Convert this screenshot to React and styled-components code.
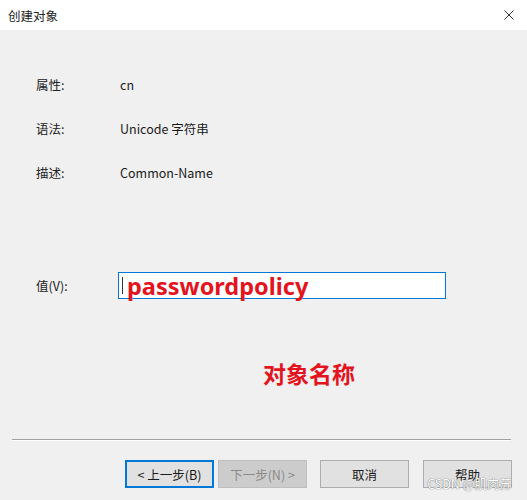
import React from "react";
import styled, { createGlobalStyle } from "styled-components";

const Global = createGlobalStyle`
  html, body {
    margin: 0;
    padding: 0;
    background: #f0f0f0;
  }
  * {
    box-sizing: border-box;
  }
`;

const Dialog = styled.div`
  position: relative;
  width: 527px;
  height: 500px;
  background: #f0f0f0;
  display: flex;
  flex-direction: column;
  font-family: "Noto Sans CJK SC", "Noto Sans", sans-serif;
  font-size: 12.5px;
  color: #1a1a1a;
  overflow: hidden;
`;

const TitleBar = styled.div`
  height: 30px;
  background: #fff;
  display: flex;
  align-items: center;
  justify-content: space-between;
  padding: 0 13px 0 8px;
  flex-shrink: 0;
`;

const Title = styled.span`
  font-size: 12.5px;
  color: #222;
`;

const Body = styled.div`
  padding-left: 36px;
  display: flex;
  flex-direction: column;
`;

const InfoList = styled.div`
  margin-top: 45px;
  display: grid;
  grid-template-columns: 84px 1fr;
  row-gap: 24px;
  line-height: 20px;
`;

const Label = styled.span`
  color: #222;
`;

const ValueRow = styled.div`
  margin-top: 89px;
  display: flex;
  align-items: center;
  height: 27px;
`;

const ValueLabel = styled.span`
  width: 82px;
  color: #222;
`;

const TextBox = styled.div`
  width: 328px;
  height: 27px;
  border: 1px solid #0078d7;
  background: #fff;
  display: flex;
  align-items: center;
  padding-left: 3px;
`;

const Caret = styled.span`
  width: 1px;
  height: 17px;
  background: #333;
  margin-right: 4px;
`;

const RedText = styled.span`
  color: #e3141e;
  font-family: "Noto Sans", sans-serif;
  font-weight: 700;
  font-size: 23.5px;
  line-height: 1;
  margin-top: 2px;
`;

const Note = styled.div`
  margin-top: 61px;
  margin-left: 227px;
  color: #e3141e;
  font-family: "Noto Sans CJK SC", sans-serif;
  font-weight: 700;
  font-size: 23px;
  line-height: 26px;
`;

const Footer = styled.div`
  margin-top: auto;
  padding: 0 15px 12px 12px;
`;

const Separator = styled.div`
  border-top: 1px solid #a0a0a0;
  border-bottom: 1px solid #ffffff;
  margin-right: 1px;
`;

const Buttons = styled.div`
  margin-top: 19px;
  display: flex;
  justify-content: flex-end;
`;

const Button = styled.button`
  width: ${(p) => p.w || 89}px;
  height: 28px;
  margin-left: ${(p) => p.gap || 0}px;
  font-family: "Noto Sans CJK SC", "Noto Sans", sans-serif;
  font-size: 12.5px;
  padding: 0;
  color: ${(p) => (p.disabled ? "#8a8a8a" : "#1a1a1a")};
  background: ${(p) => (p.disabled ? "#cccccc" : "#e1e1e1")};
  border: ${(p) =>
    p.focused
      ? "2px solid #0078d7"
      : p.disabled
      ? "1px solid #bfbfbf"
      : "1px solid #adadad"};
`;

const Watermark = styled.span`
  position: absolute;
  right: 15px;
  bottom: 7px;
  font-family: "Noto Sans CJK SC", sans-serif;
  font-size: 12.5px;
  color: #fff;
  text-shadow: 0 0 1px #777, 0 0 1px #777;
`;

const CloseIcon = () => (
  <svg width="10" height="10" viewBox="0 0 10 10">
    <path d="M0.5 0.5 L9.5 9.5 M9.5 0.5 L0.5 9.5" stroke="#333" strokeWidth="1" />
  </svg>
);

const info = [
  ["属性:", "cn"],
  ["语法:", "Unicode 字符串"],
  ["描述:", "Common-Name"],
];

export default function App() {
  return (
    <Dialog>
      <Global />
      <TitleBar>
        <Title>创建对象</Title>
        <CloseIcon />
      </TitleBar>
      <Body>
        <InfoList>
          {info.map(([k, v]) => (
            <React.Fragment key={k}>
              <Label>{k}</Label>
              <span>{v}</span>
            </React.Fragment>
          ))}
        </InfoList>
        <ValueRow>
          <ValueLabel>值(V):</ValueLabel>
          <TextBox>
            <Caret />
            <RedText>passwordpolicy</RedText>
          </TextBox>
        </ValueRow>
        <Note>对象名称</Note>
      </Body>
      <Footer>
        <Separator />
        <Buttons>
          <Button w={89} focused>&lt; 上一步(B)</Button>
          <Button w={89} gap={4} disabled>下一步(N) &gt;</Button>
          <Button w={89} gap={13}>取消</Button>
          <Button w={89} gap={14}>帮助</Button>
        </Buttons>
      </Footer>
      <Watermark>CSDN @肌肉苏</Watermark>
    </Dialog>
  );
}
